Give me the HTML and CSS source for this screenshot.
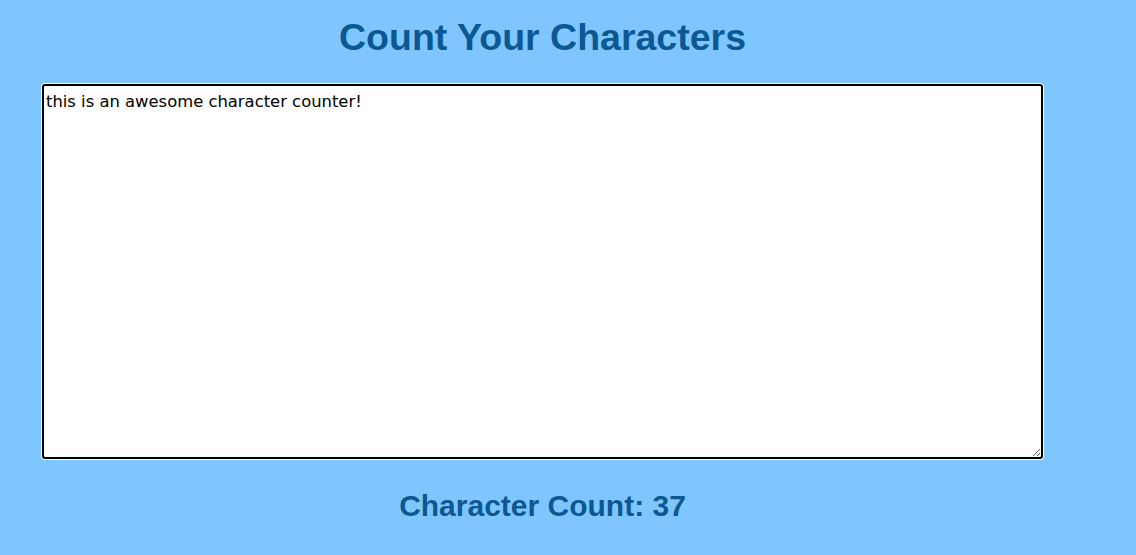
FILE: index.html
```html
<!DOCTYPE html>
<html>
<head>
<meta charset="utf-8">
<title>Count Your Characters</title>
<link rel="stylesheet" href="styles.css">
</head>
<body>
<main class="counter">
  <h1 class="counter-title">Count Your Characters</h1>
  <textarea class="counter-input" spellcheck="false">this is an awesome character counter!</textarea>
  <h2 class="counter-result">Character Count: <span class="counter-value">37</span></h2>
</main>
</body>
</html>
```
FILE: styles.css
```css
html, body {
  margin: 0;
  padding: 0;
  background: #80c6fe;
}

body {
  font-family: "Liberation Sans", Arial, sans-serif;
}

.counter {
  width: 1001px;
  margin-left: 42px;
  display: flex;
  flex-direction: column;
  align-items: stretch;
  text-align: center;
  color: #0b5893;
}

.counter-title {
  margin: 16px 0 0;
  font-size: 37.5px;
  line-height: 42px;
  font-weight: bold;
}

.counter-input {
  box-sizing: border-box;
  margin-top: 26px;
  width: 1001px;
  height: 375px;
  border: 2px solid #000;
  border-radius: 3px;
  box-shadow: 0 0 0 1px #fff;
  padding: 6px 2px 2px;
  font-family: "DejaVu Sans", "Comic Sans MS", sans-serif;
  font-size: 16.4px;
  line-height: 20px;
  color: #000;
  background: #fff;
  resize: both;
  outline: none;
}

.counter-result {
  margin: 30px 0 0;
  font-size: 30px;
  line-height: 34px;
  font-weight: bold;
}
```
